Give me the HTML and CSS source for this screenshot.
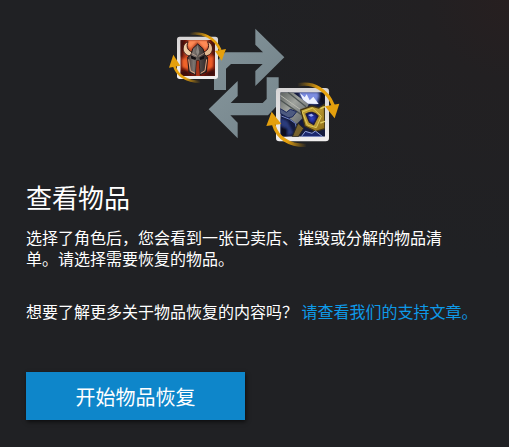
FILE: index.html
```html
<!DOCTYPE html>
<html lang="zh-CN">
<head>
    <meta charset="UTF-8">
    <meta name="viewport" content="width=device-width, initial-scale=1.0">
    <title>物品恢复</title>
    <link rel="stylesheet" href="styles.css">
</head>
<body>
    <main class="restore">
        <!-- Item swap illustration -->
        <svg class="swap" viewBox="0 0 570 405" aria-hidden="true">
            <defs>
                <linearGradient id="steel" x1="0" y1="0" x2="1" y2="1">
                    <stop offset="0" stop-color="#84949a"/>
                    <stop offset="1" stop-color="#74848b"/>
                </linearGradient>
                <linearGradient id="frame" x1="0" y1="0" x2="0" y2="1">
                    <stop offset="0" stop-color="#d6d4d5"/>
                    <stop offset="1" stop-color="#f1efef"/>
                </linearGradient>
                <linearGradient id="fadeRight" x1="0" y1="0" x2="1" y2="0">
                    <stop offset="0" stop-color="#e5a00d" stop-opacity="0"/>
                    <stop offset="0.6" stop-color="#e5a00d"/>
                </linearGradient>
                <linearGradient id="fadeLeft" x1="1" y1="0" x2="0" y2="0">
                    <stop offset="0" stop-color="#e5a00d" stop-opacity="0"/>
                    <stop offset="0.6" stop-color="#e5a00d"/>
                </linearGradient>
                <radialGradient id="fire">
                    <stop offset="0" stop-color="#ff9a5c"/>
                    <stop offset="0.6" stop-color="#cf4a22"/>
                    <stop offset="1" stop-color="#6a150b"/>
                </radialGradient>
                <linearGradient id="helm" x1="0" y1="0" x2="1" y2="0">
                    <stop offset="0" stop-color="#4a3a37"/>
                    <stop offset="0.3" stop-color="#7d7571"/>
                    <stop offset="0.5" stop-color="#5b5451"/>
                    <stop offset="1" stop-color="#2c2423"/>
                </linearGradient>
                <linearGradient id="blade" x1="0" y1="0" x2="1" y2="1">
                    <stop offset="0" stop-color="#5d625f"/>
                    <stop offset="0.4" stop-color="#a0a39e"/>
                    <stop offset="1" stop-color="#565c60"/>
                </linearGradient>
                <linearGradient id="gold" x1="0" y1="0" x2="1" y2="1">
                    <stop offset="0" stop-color="#d8bb48"/>
                    <stop offset="1" stop-color="#8f6c16"/>
                </linearGradient>
                <radialGradient id="gem">
                    <stop offset="0" stop-color="#3546c4"/>
                    <stop offset="1" stop-color="#0b1160"/>
                </radialGradient>
                <filter id="glow" x="-30%" y="-30%" width="160%" height="160%">
                    <feGaussianBlur stdDeviation="3"/>
                </filter>
                <clipPath id="helmClip"><rect x="61" y="60" width="104" height="108"/></clipPath>
                <clipPath id="swordClip"><rect x="361" y="217" width="134" height="133"/></clipPath>
            </defs>

            <!-- Big arrows -->
            <g fill="url(#steel)">
                <path d="M162 210V132L196 97H309L286 74V26L373 112L286 198V153L308 132H213L198 146V210Z"/>
                <path d="M356 172V252L324 286H211L233 308V355L146 268L233 183V228L212 249H308L320 237V172Z"/>
            </g>

            <!-- Helmet item -->
            <rect x="51" y="50" width="123" height="127" rx="8" fill="url(#frame)"/>
            <g clip-path="url(#helmClip)">
                <rect x="61" y="60" width="104" height="108" fill="url(#fire)"/>
                <g filter="url(#glow)">
                    <path d="M84 60H142L150 76L136 90L112 66L90 88L80 76Z" fill="#ff8a55"/>
                    <path d="M66 118L82 112L88 150L66 142Z" fill="#f0642c"/>
                    <path d="M144 112L160 108V142L140 152Z" fill="#ed5b28"/>
                    <path d="M61 152H80L94 168H61ZM144 156L165 148V168H134Z" fill="#3c0d08"/>
                    <path d="M61 60H72L66 90L66 110H61ZM156 60H165V110H159L160 90Z" fill="#35100c"/>
                </g>
                <!-- Horns -->
                <path d="M84 65C64 72 63 104 92 109L102 97C84 95 77 82 84 65Z" fill="#efcda6" stroke="#3b1712" stroke-width="3"/>
                <path d="M143 65C163 72 164 104 135 109L125 97C143 95 150 82 143 65Z" fill="#e3b890" stroke="#3b1712" stroke-width="3"/>
                <!-- Mask -->
                <path d="M113 72L129 86L134 104L143 112L139 156L120 164L117 122H110L107 164L87 156L83 112L93 104L98 86Z" fill="url(#helm)" stroke="#231718" stroke-width="3"/>
                <path d="M113 74L108 96L113 108L118 96Z" fill="#8d8782"/>
                <path d="M92 106L109 113L106 120L94 116ZM134 106L118 113L121 120L132 116Z" fill="#130f12"/>
                <path d="M94 100L111 109M132 100L116 109" stroke="#c7ab98" stroke-width="2" fill="none"/>
                <path d="M86 118L91 152L105 160M140 118L135 152L122 160" stroke="#e5a782" stroke-width="3" fill="none"/>
                <path d="M110 122H117L119 168H108Z" fill="#a8351b"/>
            </g>
            <path d="M88 42C130 35 165 54 181 90" fill="none" stroke="url(#fadeRight)" stroke-width="8"/>
            <path d="M165 93L198 87L185 122Z" fill="#e5a00d"/>
            <path d="M42 136C52 168 80 184 122 186" fill="none" stroke="url(#fadeLeft)" stroke-width="8"/>
            <path d="M27 143L40 104L61 137Z" fill="#e5a00d"/>

            <!-- Sword item -->
            <rect x="348" y="204" width="159" height="160" rx="10" fill="url(#frame)"/>
            <g clip-path="url(#swordClip)">
                <rect x="361" y="217" width="134" height="133" fill="#141a3d"/>
                <g filter="url(#glow)">
                    <path d="M418 217H480L470 252L445 249L425 238Z" fill="#7b8de1"/>
                    <path d="M362 294L382 303L400 340L377 350H361Z" fill="#2b3b7c"/>
                    <path d="M361 317L382 326V350H361ZM475 217H495V260L480 248Z" fill="#080a1f"/>
                </g>
                <path d="M361 217H398L446 253L432 290L410 312L361 272Z" fill="url(#blade)"/>
                <path d="M361 240L424 284M384 217L438 260" stroke="#4d5453" stroke-width="4" fill="none"/>
                <path d="M361 226L432 276" stroke="#b9bab1" stroke-width="3" fill="none"/>
                <path d="M419 218L434 232L440 223L449 241L460 230L476 252L444 251L429 239Z" fill="#edf2ff"/>
                <path d="M361 266L379 277L391 268L410 275L397 291L384 293L361 280Z" fill="#4d5a80" stroke="#1c275a" stroke-width="3"/>
                <path d="M364 288L389 298L406 310L412 334L401 350" stroke="#7588cb" stroke-width="3" fill="none"/>
                <path d="M414 310L431 325L415 350H397Z" fill="#77622d" stroke="#2b2820" stroke-width="3"/>
                <path d="M422 270L455 258L476 264L493 253L495 326L467 334L435 318Z" fill="url(#gold)" stroke="#443715" stroke-width="4"/>
                <path d="M427 276L458 264L484 289L469 323L442 315Z" fill="#bb9930" stroke="#ddc85c" stroke-width="3"/>
                <path d="M438 282C450 274 464 276 474 288L461 314L448 306Z" fill="url(#gem)" stroke="#211c3b" stroke-width="4"/>
                <path d="M444 285L455 281L461 287L453 290Z" fill="#9fadf0"/>
                <path d="M424 350L436 334L456 340L466 333L488 350Z" fill="#1b286e" stroke="#91a1d9" stroke-width="3"/>
                <path d="M481 266L495 260M481 309L495 304" stroke="#e0cc62" stroke-width="4"/>
            </g>
            <path d="M412 195C462 184 503 212 520 257" fill="none" stroke="url(#fadeRight)" stroke-width="10"/>
            <path d="M495 259L538 251L524 295Z" fill="#e5a00d"/>
            <path d="M341 314C353 354 388 378 440 376" fill="none" stroke="url(#fadeLeft)" stroke-width="10"/>
            <path d="M319 318L335 275L364 312Z" fill="#e5a00d"/>
        </svg>

        <h1 class="title">查看物品</h1>
        <p class="text intro">选择了角色后，您会看到一张已卖店、摧毁或分解的物品清单。请选择需要恢复的物品。</p>
        <p class="text">想要了解更多关于物品恢复的内容吗？ <a class="link" href="#">请查看我们的支持文章。</a></p>
        <button class="start" type="button">开始物品恢复</button>
    </main>
</body>
</html>
```

FILE: styles.css
```css
* {
    box-sizing: border-box;
}

body {
    margin: 0;
    min-height: 100vh;
    background: radial-gradient(circle at top right, #271f20 0, #222022 80px, #202124 260px);
    color: #fff;
    font-family: "Noto Sans CJK SC", sans-serif;
}

.restore {
    display: flex;
    flex-direction: column;
    align-items: flex-start;
    padding: 20px 26px 24px;
}

/* Illustration */
.swap {
    width: 190px;
    align-self: center;
}

/* Text */
.title {
    margin: 24px 0 12px;
    font-size: 26px;
    font-weight: 400;
    line-height: 36px;
}

.text {
    margin: 0;
    font-size: 16px;
    line-height: 21px;
}

.intro {
    max-width: 430px;
    margin-bottom: 32px;
}

.link {
    color: #0e9ae8;
    text-decoration: none;
}

/* Button */
.start {
    width: 219px;
    height: 48px;
    margin-top: 50px;
    border: none;
    background: #0e86ca;
    box-shadow: 1px 2px 4px rgba(0, 0, 0, 0.6);
    color: #fff;
    font-family: inherit;
    font-size: 20px;
    cursor: pointer;
}

.start:hover {
    background: #1895dc;
}
```
